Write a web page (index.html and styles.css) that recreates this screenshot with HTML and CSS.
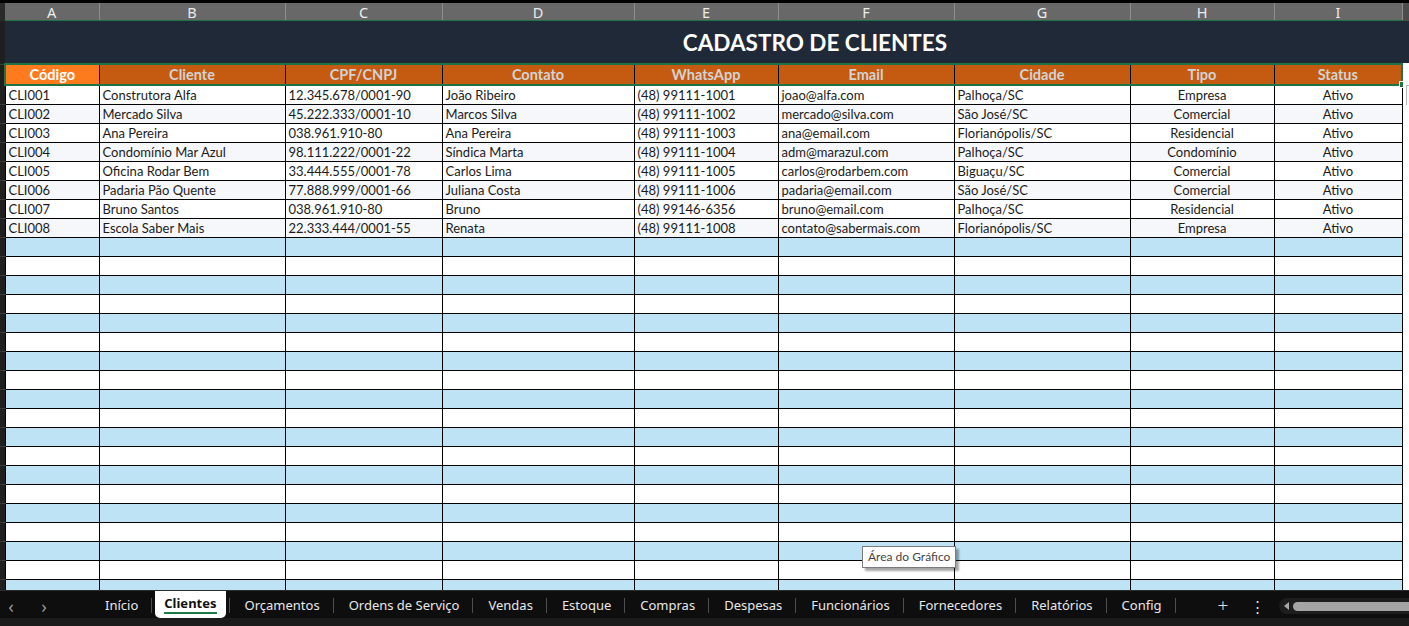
FILE: index.html
```html
<!DOCTYPE html>
<html lang="pt-BR">

<head>
    <meta charset="UTF-8">
    <title>Cadastro de Clientes</title>
    <link rel="stylesheet" href="styles.css">
</head>

<body>
    <div class="sheet-area">
        <table class="sheet">
            <colgroup>
                <col class="c-row">
                <col style="width:94px">
                <col style="width:186px">
                <col style="width:157px">
                <col style="width:192px">
                <col style="width:144px">
                <col style="width:176px">
                <col style="width:176px">
                <col style="width:144px">
                <col style="width:128px">
                <col class="c-rest">
            </colgroup>
            <tr class="col-heads">
                <td class="rh"></td>
                <td>A</td><td>B</td><td>C</td><td>D</td><td>E</td><td>F</td><td>G</td><td>H</td><td>I</td>
                <td class="rest"></td>
            </tr>
            <tr class="title-row">
                <td class="rh"></td>
                <td colspan="10" class="title">CADASTRO DE CLIENTES</td>
            </tr>
            <tr class="head-row">
                <td class="rh"></td>
                <td class="first">Código</td>
                <td>Cliente</td>
                <td>CPF/CNPJ</td>
                <td>Contato</td>
                <td>WhatsApp</td>
                <td>Email</td>
                <td>Cidade</td>
                <td>Tipo</td>
                <td class="last">Status<span class="handle"></span></td>
                <td class="rest"></td>
            </tr>
            <tr class="data">
                <td class="rh"></td>
                <td>CLI001</td><td>Construtora Alfa</td><td>12.345.678/0001-90</td><td>João Ribeiro</td>
                <td>(48) 99111-1001</td><td>joao@alfa.com</td><td>Palhoça/SC</td>
                <td class="mid">Empresa</td><td class="mid">Ativo</td>
                <td class="rest"><span class="side-btn"></span></td>
            </tr>
            <tr class="data alt">
                <td class="rh"></td>
                <td>CLI002</td><td>Mercado Silva</td><td>45.222.333/0001-10</td><td>Marcos Silva</td>
                <td>(48) 99111-1002</td><td>mercado@silva.com</td><td>São José/SC</td>
                <td class="mid">Comercial</td><td class="mid">Ativo</td>
                <td class="rest"></td>
            </tr>
            <tr class="data">
                <td class="rh"></td>
                <td>CLI003</td><td>Ana Pereira</td><td>038.961.910-80</td><td>Ana Pereira</td>
                <td>(48) 99111-1003</td><td>ana@email.com</td><td>Florianópolis/SC</td>
                <td class="mid">Residencial</td><td class="mid">Ativo</td>
                <td class="rest"></td>
            </tr>
            <tr class="data alt">
                <td class="rh"></td>
                <td>CLI004</td><td>Condomínio Mar Azul</td><td>98.111.222/0001-22</td><td>Síndica Marta</td>
                <td>(48) 99111-1004</td><td>adm@marazul.com</td><td>Palhoça/SC</td>
                <td class="mid">Condomínio</td><td class="mid">Ativo</td>
                <td class="rest"></td>
            </tr>
            <tr class="data">
                <td class="rh"></td>
                <td>CLI005</td><td>Oficina Rodar Bem</td><td>33.444.555/0001-78</td><td>Carlos Lima</td>
                <td>(48) 99111-1005</td><td>carlos@rodarbem.com</td><td>Biguaçu/SC</td>
                <td class="mid">Comercial</td><td class="mid">Ativo</td>
                <td class="rest"></td>
            </tr>
            <tr class="data alt">
                <td class="rh"></td>
                <td>CLI006</td><td>Padaria Pão Quente</td><td>77.888.999/0001-66</td><td>Juliana Costa</td>
                <td>(48) 99111-1006</td><td>padaria@email.com</td><td>São José/SC</td>
                <td class="mid">Comercial</td><td class="mid">Ativo</td>
                <td class="rest"></td>
            </tr>
            <tr class="data">
                <td class="rh"></td>
                <td>CLI007</td><td>Bruno Santos</td><td>038.961.910-80</td><td>Bruno</td>
                <td>(48) 99146-6356</td><td>bruno@email.com</td><td>Palhoça/SC</td>
                <td class="mid">Residencial</td><td class="mid">Ativo</td>
                <td class="rest"></td>
            </tr>
            <tr class="data alt">
                <td class="rh"></td>
                <td>CLI008</td><td>Escola Saber Mais</td><td>22.333.444/0001-55</td><td>Renata</td>
                <td>(48) 99111-1008</td><td>contato@sabermais.com</td><td>Florianópolis/SC</td>
                <td class="mid">Empresa</td><td class="mid">Ativo</td>
                <td class="rest"></td>
            </tr>
            <tr class="empty blue"><td class="rh"></td><td></td><td></td><td></td><td></td><td></td><td></td><td></td><td></td><td></td><td class="rest"></td></tr>
            <tr class="empty"><td class="rh"></td><td></td><td></td><td></td><td></td><td></td><td></td><td></td><td></td><td></td><td class="rest"></td></tr>
            <tr class="empty blue"><td class="rh"></td><td></td><td></td><td></td><td></td><td></td><td></td><td></td><td></td><td></td><td class="rest"></td></tr>
            <tr class="empty"><td class="rh"></td><td></td><td></td><td></td><td></td><td></td><td></td><td></td><td></td><td></td><td class="rest"></td></tr>
            <tr class="empty blue"><td class="rh"></td><td></td><td></td><td></td><td></td><td></td><td></td><td></td><td></td><td></td><td class="rest"></td></tr>
            <tr class="empty"><td class="rh"></td><td></td><td></td><td></td><td></td><td></td><td></td><td></td><td></td><td></td><td class="rest"></td></tr>
            <tr class="empty blue"><td class="rh"></td><td></td><td></td><td></td><td></td><td></td><td></td><td></td><td></td><td></td><td class="rest"></td></tr>
            <tr class="empty"><td class="rh"></td><td></td><td></td><td></td><td></td><td></td><td></td><td></td><td></td><td></td><td class="rest"></td></tr>
            <tr class="empty blue"><td class="rh"></td><td></td><td></td><td></td><td></td><td></td><td></td><td></td><td></td><td></td><td class="rest"></td></tr>
            <tr class="empty"><td class="rh"></td><td></td><td></td><td></td><td></td><td></td><td></td><td></td><td></td><td></td><td class="rest"></td></tr>
            <tr class="empty blue"><td class="rh"></td><td></td><td></td><td></td><td></td><td></td><td></td><td></td><td></td><td></td><td class="rest"></td></tr>
            <tr class="empty"><td class="rh"></td><td></td><td></td><td></td><td></td><td></td><td></td><td></td><td></td><td></td><td class="rest"></td></tr>
            <tr class="empty blue"><td class="rh"></td><td></td><td></td><td></td><td></td><td></td><td></td><td></td><td></td><td></td><td class="rest"></td></tr>
            <tr class="empty"><td class="rh"></td><td></td><td></td><td></td><td></td><td></td><td></td><td></td><td></td><td></td><td class="rest"></td></tr>
            <tr class="empty blue"><td class="rh"></td><td></td><td></td><td></td><td></td><td></td><td></td><td></td><td></td><td></td><td class="rest"></td></tr>
            <tr class="empty"><td class="rh"></td><td></td><td></td><td></td><td></td><td></td><td></td><td></td><td></td><td></td><td class="rest"></td></tr>
            <tr class="empty blue"><td class="rh"></td><td></td><td></td><td></td><td></td><td></td><td></td><td></td><td></td><td></td><td class="rest"></td></tr>
            <tr class="empty"><td class="rh"></td><td></td><td></td><td></td><td></td><td></td><td></td><td></td><td></td><td></td><td class="rest"></td></tr>
            <tr class="empty blue"><td class="rh"></td><td></td><td></td><td></td><td></td><td></td><td></td><td></td><td></td><td></td><td class="rest"></td></tr>
            <tr class="empty"><td class="rh"></td><td></td><td></td><td></td><td></td><td></td><td></td><td></td><td></td><td></td><td class="rest"></td></tr>
        </table>
        <div class="tooltip">Área do Gráfico</div>
    </div>

    <div class="tabbar">
        <div class="nav">
            <span class="arrow">&lsaquo;</span>
            <span class="arrow">&rsaquo;</span>
        </div>
        <div class="tabs">
            <span class="tab">Início</span>
            <span class="sep"></span>
            <span class="tab active">Clientes</span>
            <span class="sep"></span>
            <span class="tab">Orçamentos</span>
            <span class="sep"></span>
            <span class="tab">Ordens de Serviço</span>
            <span class="sep"></span>
            <span class="tab">Vendas</span>
            <span class="sep"></span>
            <span class="tab">Estoque</span>
            <span class="sep"></span>
            <span class="tab">Compras</span>
            <span class="sep"></span>
            <span class="tab">Despesas</span>
            <span class="sep"></span>
            <span class="tab">Funcionários</span>
            <span class="sep"></span>
            <span class="tab">Fornecedores</span>
            <span class="sep"></span>
            <span class="tab">Relatórios</span>
            <span class="sep"></span>
            <span class="tab">Config</span>
            <span class="sep"></span>
        </div>
        <span class="add">+</span>
        <span class="more">&#8942;</span>
        <div class="hscroll">
            <span class="tri"></span>
            <span class="thumb"></span>
        </div>
    </div>
</body>

</html>
```

FILE: styles.css
```css
body {
    margin: 0;
    background-color: #000;
    width: 1409px;
    height: 626px;
    overflow: hidden;
    font-family: Lato, "Liberation Sans", sans-serif;
}

.sheet-area {
    position: relative;
    height: 587px;
    padding-top: 3px;
    overflow: hidden;
    background-color: #fff;
    box-shadow: inset 0 3px 0 #000;
}

.sheet {
    table-layout: fixed;
    border-collapse: collapse;
    width: 1409px;
}

.c-row {
    width: 5px;
}

.c-rest {
    width: 7px;
}

.sheet td {
    padding: 0 0 0 3px;
    white-space: nowrap;
    overflow: hidden;
    font-size: 13px;
    color: #1b1b1b;
    border: 1px solid #000;
}

.sheet td.rh {
    background-color: #1f1f1f;
    border: none;
    border-bottom: 1px solid #3c3c3c;
    padding: 0;
}

.sheet td.rest {
    background-color: #fff;
    border: none;
    padding: 0;
    position: relative;
}

/* letras das colunas */
.col-heads td {
    height: 17px;
    background-color: #686868;
    color: #ececec;
    font-family: "Noto Sans", sans-serif;
    font-size: 14.5px;
    text-align: center;
    padding: 0;
    border: none;
    border-right: 1px solid #8d8d8d;
    border-bottom: 1px solid #217346;
    line-height: 16px;
}

.col-heads td.rh {
    background-color: #2a2a2a;
    border-bottom: none;
}

.col-heads td.rest {
    background-color: #4c4c4c;
    border: none;
}

.title-row td.title {
    height: 42px;
    background-color: #202938;
    color: #fff;
    font-size: 22.5px;
    font-weight: bold;
    text-align: center;
    padding: 0 0 0 216px;
    border: none;
}

.head-row td {
    height: 19px;
    background-color: #c55a11;
    color: #d3d3d3;
    font-weight: bold;
    font-size: 14.5px;
    text-align: center;
    padding: 0;
    border-top: 2px solid #217346;
    border-bottom: 2px solid #217346;
}

.head-row td.first {
    background-color: #fd7a1d;
    color: #fff;
    border-left: 2px solid #217346;
}

.head-row td.last {
    position: relative;
    overflow: visible;
    border-right: 2px solid #217346;
}

.head-row td.rh,
.head-row td.rest {
    border-top: none;
    border-bottom: none;
}

.head-row td.rh {
    background-color: #1f1f1f;
}

.head-row td.rest {
    background-color: #fff;
}

.handle {
    position: absolute;
    right: -5px;
    bottom: -4px;
    width: 5px;
    height: 5px;
    background-color: #217346;
    border: 1px solid #fff;
}

.data td {
    height: 18px;
    background-color: #fff;
}

.data.alt td {
    background-color: #f5f7fb;
}

.data td.mid {
    text-align: center;
    padding: 0;
}

.side-btn {
    position: absolute;
    left: 3px;
    top: 0;
    width: 6px;
    height: 24px;
    border: 1px solid #b8b8b8;
    border-right: none;
    background-color: #fafafa;
}

.empty td {
    height: 18px;
    background-color: #fff;
}

.empty.blue td {
    background-color: #bee3f4;
}

.empty td.rh,
.data td.rh {
    background-color: #1f1f1f;
}

.empty td.rest,
.data td.rest {
    background-color: #fff;
}

.tooltip {
    position: absolute;
    left: 862px;
    top: 546px;
    padding: 2px 5px 3px 5px;
    background-color: #fff;
    border: 1px solid #7a7a7a;
    box-shadow: 3px 3px 2px rgba(0, 0, 0, 0.35);
    font-size: 12px;
    color: #454545;
}

/* barra de abas */
.tabbar {
    height: 35px;
    border-top: 1px solid #2c2c2c;
    background-color: #0e0e0e;
    display: flex;
    align-items: flex-start;
    font-family: "Noto Sans", sans-serif;
    font-size: 13px;
    color: #e8e8e8;
    box-shadow: inset 0 -8px 0 #1b1b1b;
}

.nav {
    width: 85px;
    display: flex;
    gap: 21px;
    padding-left: 5px;
    height: 29px;
    align-items: center;
}

.arrow {
    color: #9a9a9a;
    font-size: 18px;
    width: 12px;
    text-align: center;
}

.tabs {
    display: flex;
    align-items: center;
    height: 27px;
}

.tab {
    padding: 2px 13px 0 15px;
    line-height: 27px;
}

.tab.active {
    background-color: #fff;
    color: #111;
    font-weight: bold;
    margin: 0 3px;
    padding: 0 9px;
    border-radius: 0 0 5px 5px;
    line-height: 25px;
    border-bottom: 2px solid #fff;
    position: relative;
}

.tab.active::after {
    content: "";
    position: absolute;
    left: 9px;
    right: 9px;
    bottom: 2px;
    height: 2px;
    background-color: #1e7a45;
}

.sep {
    width: 1px;
    height: 15px;
    margin-top: 2px;
    background-color: #4e4e4e;
}

.add {
    margin-left: 42px;
    font-size: 19px;
    line-height: 29px;
    font-weight: 300;
    color: #e0e0e0;
}

.more {
    margin-left: 22px;
    font-size: 15px;
    line-height: 30px;
    color: #e0e0e0;
}

.hscroll {
    margin-left: 14px;
    margin-top: 7px;
    flex: 1;
    height: 16px;
    border-radius: 8px 0 0 8px;
    background-color: #1d1d1d;
    display: flex;
    align-items: center;
    padding-left: 5px;
    gap: 4px;
}

.tri {
    width: 0;
    height: 0;
    border-top: 4px solid transparent;
    border-bottom: 4px solid transparent;
    border-right: 5px solid #a8a8a8;
}

.thumb {
    flex: 1;
    height: 9px;
    border-radius: 5px 0 0 5px;
    background-color: #a4a4a4;
}
```
